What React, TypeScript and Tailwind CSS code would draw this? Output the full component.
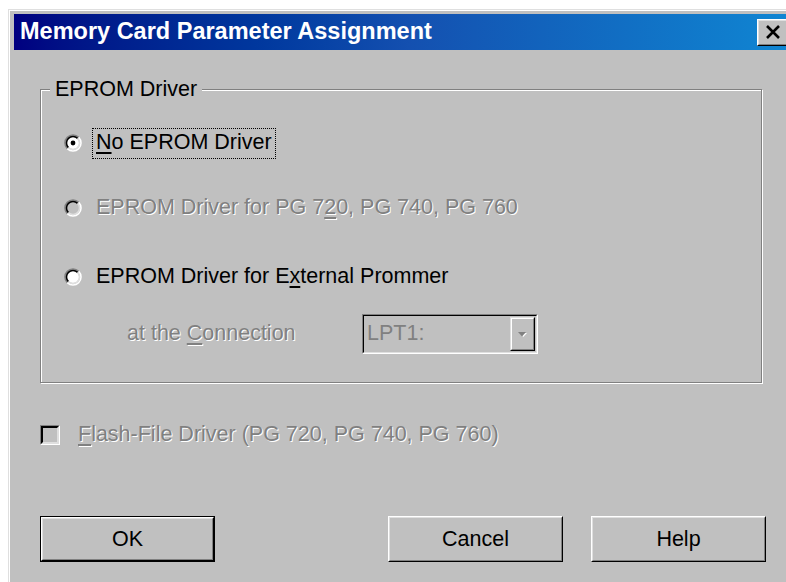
import type React from "react"

// Classic Win9x radio: two bevel rings split along the diagonal
const Radio: React.FC<{ checked?: boolean; disabled?: boolean }> = ({ checked = false, disabled = false }) => (
  <svg width="18" height="18" viewBox="0 0 18 18" className="shrink-0">
    <circle cx="9" cy="9" r="6" fill={disabled ? "#c0c0c0" : "#fff"} />
    <path d="M3.34 14.66 A8 8 0 0 1 14.66 3.34" fill="none" stroke="#808080" strokeWidth="1.6" />
    <path d="M14.66 3.34 A8 8 0 0 1 3.34 14.66" fill="none" stroke="#fff" strokeWidth="1.6" />
    <path d="M4.4 13.6 A6.5 6.5 0 0 1 13.6 4.4" fill="none" stroke="#000" strokeWidth="1.5" />
    <path d="M13.6 4.4 A6.5 6.5 0 0 1 4.4 13.6" fill="none" stroke="#dfdfdf" strokeWidth="1.5" />
    {checked && <circle cx="9" cy="9" r="2.4" fill="#000" />}
  </svg>
)

const Button: React.FC<{ label: string; isDefault?: boolean; className?: string }> = ({ label, isDefault = false, className = "" }) => (
  <div className={`h-[46px] w-[175px] ${isDefault ? "border border-black" : ""} ${className}`}>
    <div className="flex h-full border border-t-white border-l-white border-b-black border-r-black">
      <div className="flex flex-1 items-center justify-center border border-t-[#dfdfdf] border-l-[#dfdfdf] border-b-[#808080] border-r-[#808080] bg-[#c0c0c0] text-[21.5px] text-black">
        {label}
      </div>
    </div>
  </div>
)

const disabledText = "text-[#808080] [text-shadow:1px_1px_0_#fff]"

export default function App() {
  return (
    <div className="h-[582px] overflow-hidden bg-white pl-[8px] pt-[9px] font-['Liberation_Sans',Arial,sans-serif]">
      <div className="h-[600px] w-[800px] border-l border-t border-[#dfdfdf] bg-[#c0c0c0]">
        <div className="h-full border-l border-t border-white pl-[4px] pr-[3px] pt-[3px]">
          {/* title bar */}
          <div className="flex h-[36px] items-center bg-linear-to-r from-[#000080] via-[#1450b0] to-[#1088d4]">
            <span className="pl-[6px] text-[23.5px] font-bold leading-none text-white">Memory Card Parameter Assignment</span>
            <div className="ml-auto mr-[16px] h-[27px] w-[32px] border border-t-white border-l-white border-b-black border-r-black">
              <div className="flex h-full items-center justify-center border border-t-[#dfdfdf] border-l-[#dfdfdf] border-b-[#808080] border-r-[#808080] bg-[#c0c0c0]">
                <svg width="16" height="14" viewBox="0 0 16 14">
                  <path d="M2 1 L14 13 M14 1 L2 13" stroke="#000" strokeWidth="2.6" />
                </svg>
              </div>
            </div>
          </div>

          <div className="pl-[26px] pt-[39px] text-[21.5px] text-black">
            {/* EPROM Driver group */}
            <div className="relative h-[294px] w-[722px] border border-[#808080] pl-[23px] pt-[38px] shadow-[1px_1px_0_#fff,inset_1px_1px_0_#fff]">
              <span className="absolute left-[9px] top-[-13px] bg-[#c0c0c0] px-[5px] leading-[24px]">EPROM Driver</span>

              <div className="flex h-[30px] items-center">
                <Radio checked />
                <span className="ml-[10px] flex h-[31px] items-center border border-dotted border-black px-[3px] leading-none">
                  <span className="underline underline-offset-[3px]">N</span>o EPROM Driver
                </span>
              </div>

              <div className="mt-[35px] flex h-[30px] items-center">
                <Radio disabled />
                <span className={`ml-[14px] leading-none ${disabledText}`}>
                  EPROM Driver for PG 7<span className="underline underline-offset-[3px]">2</span>0, PG 740, PG 760
                </span>
              </div>

              <div className="mt-[39px] flex h-[30px] items-center">
                <Radio />
                <span className="ml-[14px] leading-none">
                  EPROM Driver for E<span className="underline underline-offset-[3px]">x</span>ternal Prommer
                </span>
              </div>

              <div className="mt-[22px] flex h-[40px] items-center">
                <span className={`ml-[63px] w-[235px] leading-none ${disabledText}`}>
                  at the <span className="underline underline-offset-[3px]">C</span>onnection
                </span>
                {/* port combo, disabled */}
                <div className="h-[40px] w-[176px] border border-t-[#808080] border-l-[#808080] border-b-white border-r-white">
                  <div className="flex h-full items-center border border-t-black border-l-black border-b-[#dfdfdf] border-r-[#dfdfdf] bg-[#c0c0c0] pr-[1px]">
                    <span className="pl-[3px] leading-none text-[#808080]">LPT1:</span>
                    <div className="ml-auto h-[34px] w-[25px] border border-t-[#dfdfdf] border-l-[#dfdfdf] border-b-black border-r-black">
                      <div className="flex h-full items-center justify-center border border-t-white border-l-white border-b-[#808080] border-r-[#808080]">
                        <svg width="11" height="7" viewBox="0 0 11 7">
                          <path d="M2.5 2 L10 2 L6.25 6 Z" fill="#fff" />
                          <path d="M1 1 L9 1 L5 5.5 Z" fill="#808080" />
                        </svg>
                      </div>
                    </div>
                  </div>
                </div>
              </div>
            </div>

            {/* flash driver checkbox, disabled */}
            <div className="mt-[42px] flex h-[20px] items-center">
              <div className="h-[20px] w-[20px] border border-t-[#808080] border-l-[#808080] border-b-white border-r-white">
                <div className="h-full border-2 border-t-black border-l-black border-b-[#dfdfdf] border-r-[#dfdfdf] bg-[#c0c0c0]" />
              </div>
              <span className={`ml-[18px] leading-none ${disabledText}`}>
                <span className="underline underline-offset-[3px]">F</span>lash-File Driver (PG 720, PG 740, PG 760)
              </span>
            </div>

            <div className="mt-[71px] flex">
              <Button label="OK" isDefault />
              <Button label="Cancel" className="ml-[173px]" />
              <Button label="Help" className="ml-[28px]" />
            </div>
          </div>
        </div>
      </div>
    </div>
  )
}
